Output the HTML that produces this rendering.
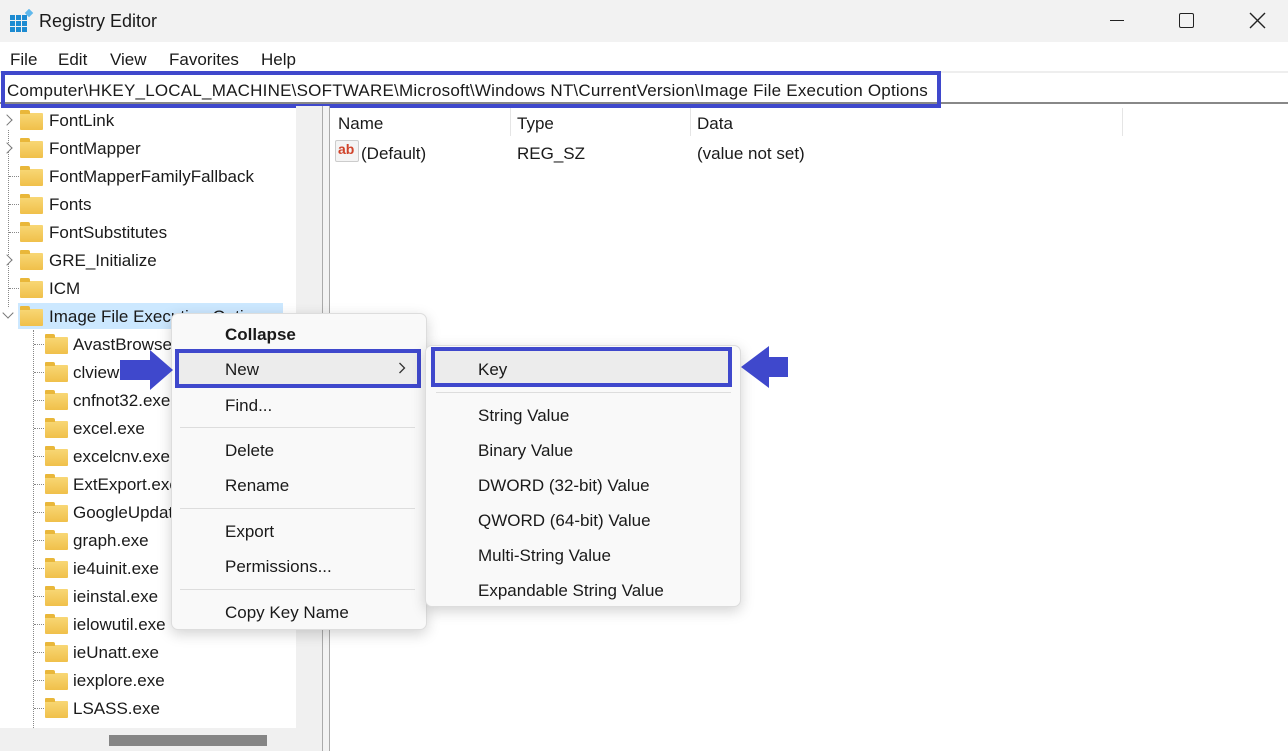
<!DOCTYPE html>
<html><head><style>
*{margin:0;padding:0;box-sizing:border-box}
body{width:1288px;height:751px;overflow:hidden;background:#fff;font-family:"Liberation Sans",sans-serif;font-size:17px;color:#1a1a1a;position:relative}
.a{position:absolute;white-space:nowrap}
.fold{position:absolute;width:23px;height:17px;background:linear-gradient(#f8d775,#f0c04a);border-radius:1px}
.fold:before{content:"";position:absolute;left:0;top:-3px;width:10px;height:4px;background:#e9b73a;border-radius:1px 2px 0 0}
.chev{position:absolute;width:8px;height:8px;border-right:1.5px solid #777;border-bottom:1.5px solid #777;transform:rotate(-45deg)}
.dv{position:absolute;border-left:1px dotted #888}
.dh{position:absolute;border-top:1px dotted #888;width:10px}
.mi{position:absolute;white-space:nowrap}
.sep{position:absolute;height:1px;background:#ddd}
</style></head><body>
<div class="a" style="left:0;top:0;width:1288px;height:42px;background:#f2f2f2"></div>
<svg class="a" style="left:10px;top:9px" width="24" height="24" viewBox="0 0 24 24"><g fill="#1d8bd1"><rect x="0" y="6" width="5" height="5"/><rect x="6" y="6" width="5" height="5"/><rect x="12" y="6" width="5" height="5"/><rect x="0" y="12" width="5" height="5"/><rect x="6" y="12" width="5" height="5"/><rect x="12" y="12" width="5" height="5"/><rect x="0" y="18" width="5" height="5"/><rect x="6" y="18" width="5" height="5"/><rect x="12" y="18" width="5" height="5"/></g><rect x="16" y="1" width="6" height="6" fill="#5fb8ec" transform="rotate(45 19 4)"/></svg>
<div class="a" style="left:39px;top:11px;font-size:18px">Registry Editor</div>
<div class="a" style="left:1110px;top:20px;width:14px;height:1px;background:#222"></div>
<div class="a" style="left:1179px;top:13px;width:15px;height:15px;border:1.5px solid #222;border-radius:2px"></div>
<svg class="a" style="left:1249px;top:12px" width="17" height="17"><path d="M1 1L16 16M16 1L1 16" stroke="#222" stroke-width="1.4"/></svg>
<div class="a" style="left:10px;top:50px">File</div>
<div class="a" style="left:58px;top:50px">Edit</div>
<div class="a" style="left:110px;top:50px">View</div>
<div class="a" style="left:169px;top:50px">Favorites</div>
<div class="a" style="left:261px;top:50px">Help</div>
<div class="a" style="left:0;top:71px;width:1288px;height:33px;border-top:2px solid #eee;border-bottom:2px solid #888"></div>
<div class="a" style="left:1px;top:71px;width:940px;height:37px;border:4px solid #3f48cc"></div>
<div class="a" style="left:7px;top:81px;letter-spacing:0.22px">Computer\HKEY_LOCAL_MACHINE\SOFTWARE\Microsoft\Windows NT\CurrentVersion\Image File Execution Options</div>
<div class="a" style="left:296px;top:106px;width:27px;height:645px;background:#f0f0f0"></div>
<div class="a" style="left:0;top:728px;width:296px;height:23px;background:#f0f0f0"></div>
<div class="a" style="left:109px;top:735px;width:158px;height:11px;background:#858585"></div>
<div class="a" style="left:322px;top:106px;width:1px;height:645px;background:#aaa"></div>
<div class="a" style="left:329px;top:106px;width:1px;height:645px;background:#aaa"></div>
<div class="a" style="left:323px;top:106px;width:6px;height:645px;background:#f3f3f3"></div>
<div class="a" style="left:18px;top:303px;width:265px;height:26px;background:#cce8ff"></div>
<div class="dv" style="left:8px;top:130px;height:185px"></div>
<div class="dv" style="left:33px;top:330px;height:398px"></div>
<div id="tree"></div>
<div class="a" style="left:338px;top:114px">Name</div>
<div class="a" style="left:517px;top:114px">Type</div>
<div class="a" style="left:697px;top:114px">Data</div>
<div class="a" style="left:510px;top:108px;width:1px;height:28px;background:#e5e5e5"></div>
<div class="a" style="left:690px;top:108px;width:1px;height:28px;background:#e5e5e5"></div>
<div class="a" style="left:1122px;top:108px;width:1px;height:28px;background:#e5e5e5"></div>
<div class="a" style="left:335px;top:140px;width:24px;height:22px;background:#f4f4f4;border:1px solid #ccc;border-radius:2px;color:#d0432a;font-weight:bold;font-size:14px;line-height:16px;padding-left:2px">ab</div>
<div class="a" style="left:361px;top:144px">(Default)</div>
<div class="a" style="left:517px;top:144px">REG_SZ</div>
<div class="a" style="left:697px;top:144px">(value not set)</div>
<div class="a" style="left:171px;top:313px;width:256px;height:317px;background:#f9f9f9;border:1px solid #ddd;border-radius:7px;box-shadow:0 4px 14px rgba(0,0,0,.18)"></div>
<div class="mi" style="left:225px;top:325px;font-weight:bold">Collapse</div>
<div class="a" style="left:175px;top:349px;width:246px;height:39px;background:#ececec;border:4px solid #3f48cc"></div>
<div class="mi" style="left:225px;top:360px">New</div>
<svg class="a" style="left:398px;top:362px" width="8" height="12"><path d="M1.5 1L6.5 6L1.5 11" stroke="#333" stroke-width="1.3" fill="none"/></svg>
<div class="mi" style="left:225px;top:396px">Find...</div>
<div class="sep" style="left:180px;top:427px;width:235px"></div>
<div class="mi" style="left:225px;top:441px">Delete</div>
<div class="mi" style="left:225px;top:476px">Rename</div>
<div class="sep" style="left:180px;top:508px;width:235px"></div>
<div class="mi" style="left:225px;top:522px">Export</div>
<div class="mi" style="left:225px;top:557px">Permissions...</div>
<div class="sep" style="left:180px;top:589px;width:235px"></div>
<div class="mi" style="left:225px;top:603px">Copy Key Name</div>
<div class="a" style="left:425px;top:345px;width:316px;height:262px;background:#f9f9f9;border:1px solid #ddd;border-radius:7px;box-shadow:0 4px 14px rgba(0,0,0,.18)"></div>
<div class="a" style="left:431px;top:347px;width:301px;height:40px;background:#ececec;border:4px solid #3f48cc"></div>
<div class="mi" style="left:478px;top:360px">Key</div>
<div class="sep" style="left:436px;top:392px;width:295px"></div>
<div class="mi" style="left:478px;top:406px">String Value</div>
<div class="mi" style="left:478px;top:441px">Binary Value</div>
<div class="mi" style="left:478px;top:476px">DWORD (32-bit) Value</div>
<div class="mi" style="left:478px;top:511px">QWORD (64-bit) Value</div>
<div class="mi" style="left:478px;top:546px">Multi-String Value</div>
<div class="mi" style="left:478px;top:581px">Expandable String Value</div>
<svg class="a" style="left:120px;top:350px" width="54" height="40"><path d="M0 10H30V0L53 20L30 40V30H0Z" fill="#3f48cc"/></svg>
<svg class="a" style="left:741px;top:346px" width="48" height="42"><path d="M47 11H28V0L0 21L28 42V31H47Z" fill="#3f48cc"/></svg>
<script>
var L1=[["FontLink",1],["FontMapper",1],["FontMapperFamilyFallback",0],["Fonts",0],["FontSubstitutes",0],["GRE_Initialize",1],["ICM",0],["Image File Execution Options",2]];
var L2=["AvastBrowser.exe","clview.exe","cnfnot32.exe","excel.exe","excelcnv.exe","ExtExport.exe","GoogleUpdate.exe","graph.exe","ie4uinit.exe","ieinstal.exe","ielowutil.exe","ieUnatt.exe","iexplore.exe","LSASS.exe"];
var h="";
L1.forEach(function(r,i){var y=120+28*i;
 if(r[1]==1)h+='<div class="chev" style="left:3px;top:'+(y-4)+'px;background:#fff"></div>';
 else if(r[1]==2)h+='<div class="chev" style="left:4px;top:'+(y-7)+'px;transform:rotate(45deg);background:#fff"></div>';
 else h+='<div class="dh" style="left:9px;top:'+y+'px"></div>';
 h+='<div class="fold" style="left:20px;top:'+(y-7)+'px"></div><div class="a" style="left:49px;top:'+(y-9)+'px">'+r[0]+'</div>';});
L2.forEach(function(t,i){var y=344+28*i;
 h+='<div class="dh" style="left:34px;top:'+y+'px"></div><div class="fold" style="left:45px;top:'+(y-7)+'px"></div><div class="a" style="left:73px;top:'+(y-9)+'px">'+t+'</div>';});
document.getElementById("tree").innerHTML=h;
</script>
</body></html>
